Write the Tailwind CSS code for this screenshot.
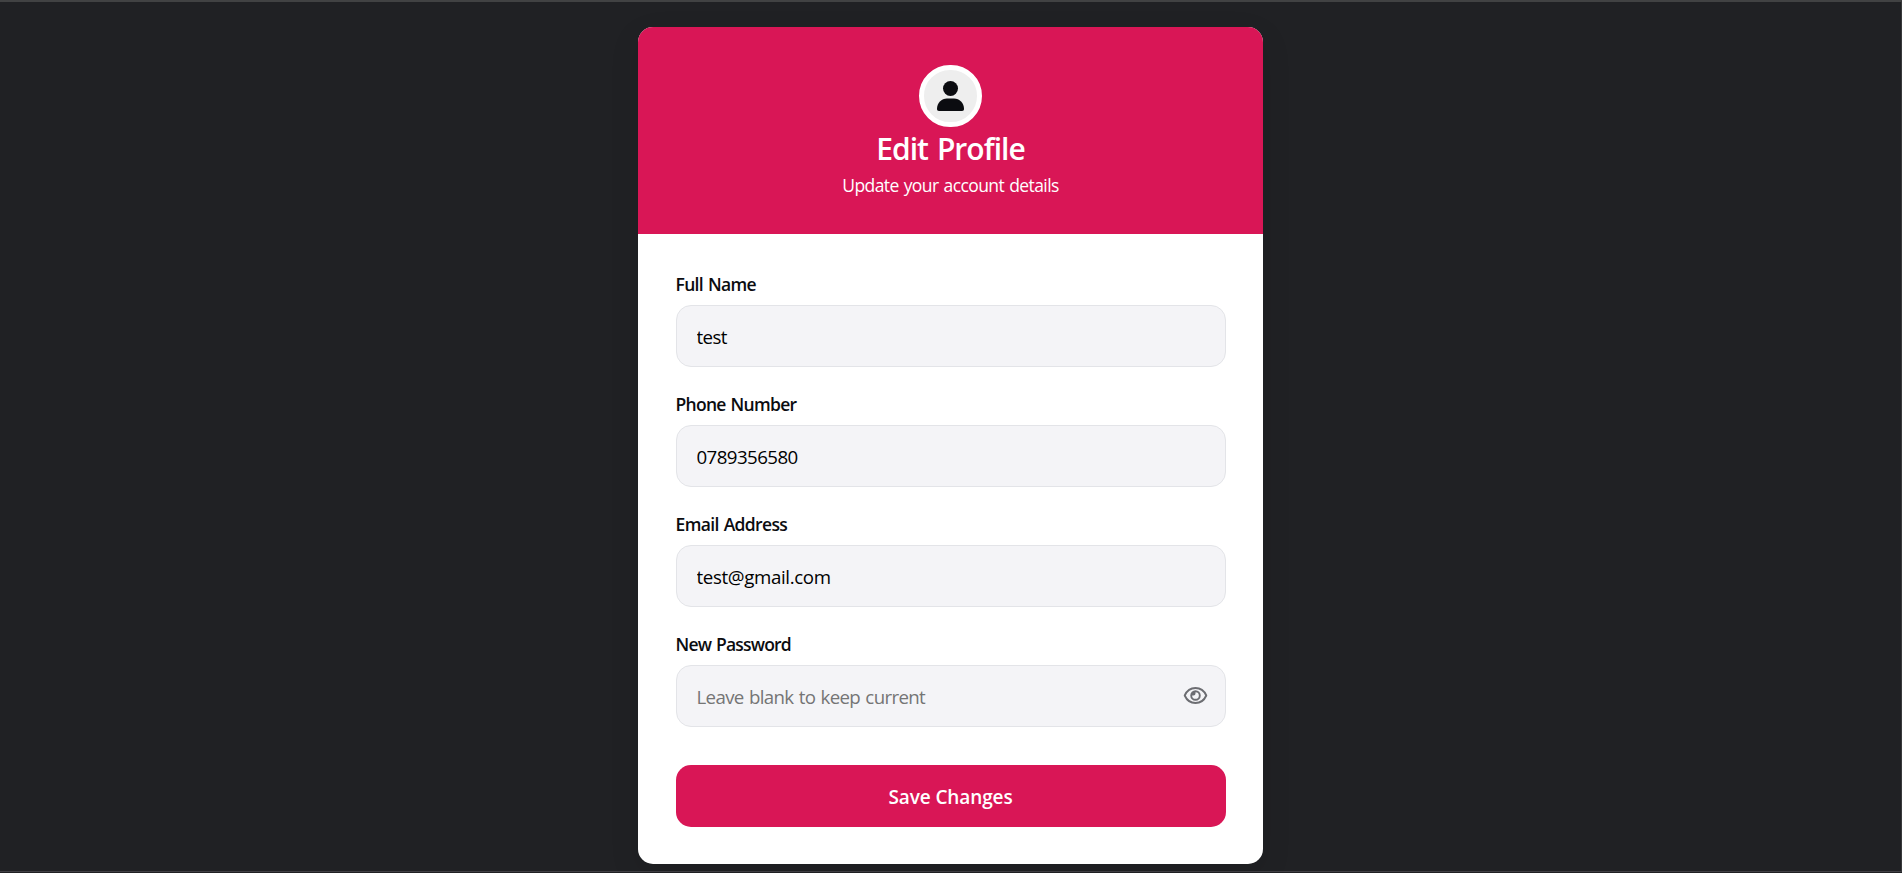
<!DOCTYPE html>
<html lang="en">
<head>
<meta charset="utf-8">
<title>Edit Profile</title>
<script src="https://cdn.jsdelivr.net/npm/@tailwindcss/browser@4"></script>
</head>
<body class="flex h-[873px] flex-col overflow-hidden bg-[#202124] font-['Segoe_UI','Open_Sans',sans-serif] text-[#0b0c10]">
<div class="flex h-[872px] flex-col items-center border-t-2 border-r border-b border-t-[#414243] border-r-[#38393b] border-b-[#414045] pt-[25px]">
  <main class="h-[837px] w-[625px] shrink-0 overflow-hidden rounded-[15px] bg-white shadow-[0_10px_30px_rgba(0,0,0,0.1)]">
    <header class="flex h-[207px] flex-col items-center bg-[#d91656] pt-[38px] text-white">
      <div class="flex h-[62px] w-[63px] items-center justify-center rounded-full border-5 border-white bg-[#eee]">
        <svg class="h-[30px] w-[27px] shrink-0" viewBox="0 0 27 30" fill="#0b0c10"><circle cx="13.5" cy="7.5" r="7.5"/><path d="M10 17.5h7c5.500 0 10 4.500 10 10.500 0 1.300-.7 2-2 2H2c-1.300 0-2-.7-2-2 0-6 4.500-10.500 10-10.500z"/></svg>
      </div>
      <h1 class="mt-px h-[41px] text-[30px] leading-[41px] font-semibold tracking-[-0.95px] [word-spacing:2px]">Edit Profile</h1>
      <p class="mt-1 text-[17.5px] leading-6 tracking-[-0.58px] [word-spacing:1px]">Update your account details</p>
    </header>
    <form class="px-[37.500px] pt-[37px]">
      <div class="flex flex-col gap-6">
        <div>
          <label for="name" class="block h-[26px] text-[17.5px] leading-[26px] font-semibold tracking-[-0.66px] [word-spacing:1px]">Full Name</label>
          <input id="name" value="test" class="mt-2 block h-[62px] w-full rounded-[15px] border border-[#e3e4e8] bg-[#f4f4f7] px-5 text-[18.700px] tracking-[-0.6px] text-black outline-none">
        </div>
        <div>
          <label for="phone" class="block h-[26px] text-[17.5px] leading-[26px] font-semibold tracking-[-0.7px] [word-spacing:1px]">Phone Number</label>
          <input id="phone" value="0789356580" class="mt-2 block h-[62px] w-full rounded-[15px] border border-[#e3e4e8] bg-[#f4f4f7] px-5 text-[18.700px] tracking-[-0.57px] text-black outline-none">
        </div>
        <div>
          <label for="email" class="block h-[26px] text-[17.5px] leading-[26px] font-semibold tracking-[-0.63px] [word-spacing:1px]">Email Address</label>
          <input id="email" value="test@gmail.com" class="mt-2 block h-[62px] w-full rounded-[15px] border border-[#e3e4e8] bg-[#f4f4f7] px-5 text-[18.700px] tracking-[-0.36px] text-black outline-none">
        </div>
        <div>
          <label for="password" class="block h-[26px] text-[17.5px] leading-[26px] font-semibold tracking-[-0.79px] [word-spacing:1px]">New Password</label>
          <div class="relative mt-2">
            <input id="password" type="password" placeholder="Leave blank to keep current" class="block h-[62px] w-full rounded-[15px] border border-[#e3e4e8] bg-[#f4f4f7] px-5 text-[18.700px] tracking-[-0.65px] outline-none [word-spacing:1px] placeholder:text-[#757575]">
            <svg class="absolute top-[21px] right-[18px] h-[19px] w-[25px]" viewBox="0 0 25 19" fill="none" stroke="#6c6d72" stroke-width="1.900"><path d="M1.700 9.500C3.800 4.800 7.900 2 12.500 2s8.700 2.800 10.800 7.500C21.200 14.200 17.100 17 12.500 17S3.800 14.200 1.700 9.500z" stroke-linejoin="round"/><circle cx="12.500" cy="9.500" r="4.300"/><path d="M12.500 5.500v2a2 2 0 0 1-2 2h-2a4 4 0 0 1 4-4z" fill="#6c6d72" stroke="none"/></svg>
          </div>
        </div>
      </div>
      <button type="button" class="mt-[38px] block h-[62px] w-full rounded-[15px] bg-[#d91656] pt-0.5 text-[19px] font-semibold tracking-[-0.1px] text-white">Save Changes</button>
    </form>
  </main>
</div>
</body>
</html>
